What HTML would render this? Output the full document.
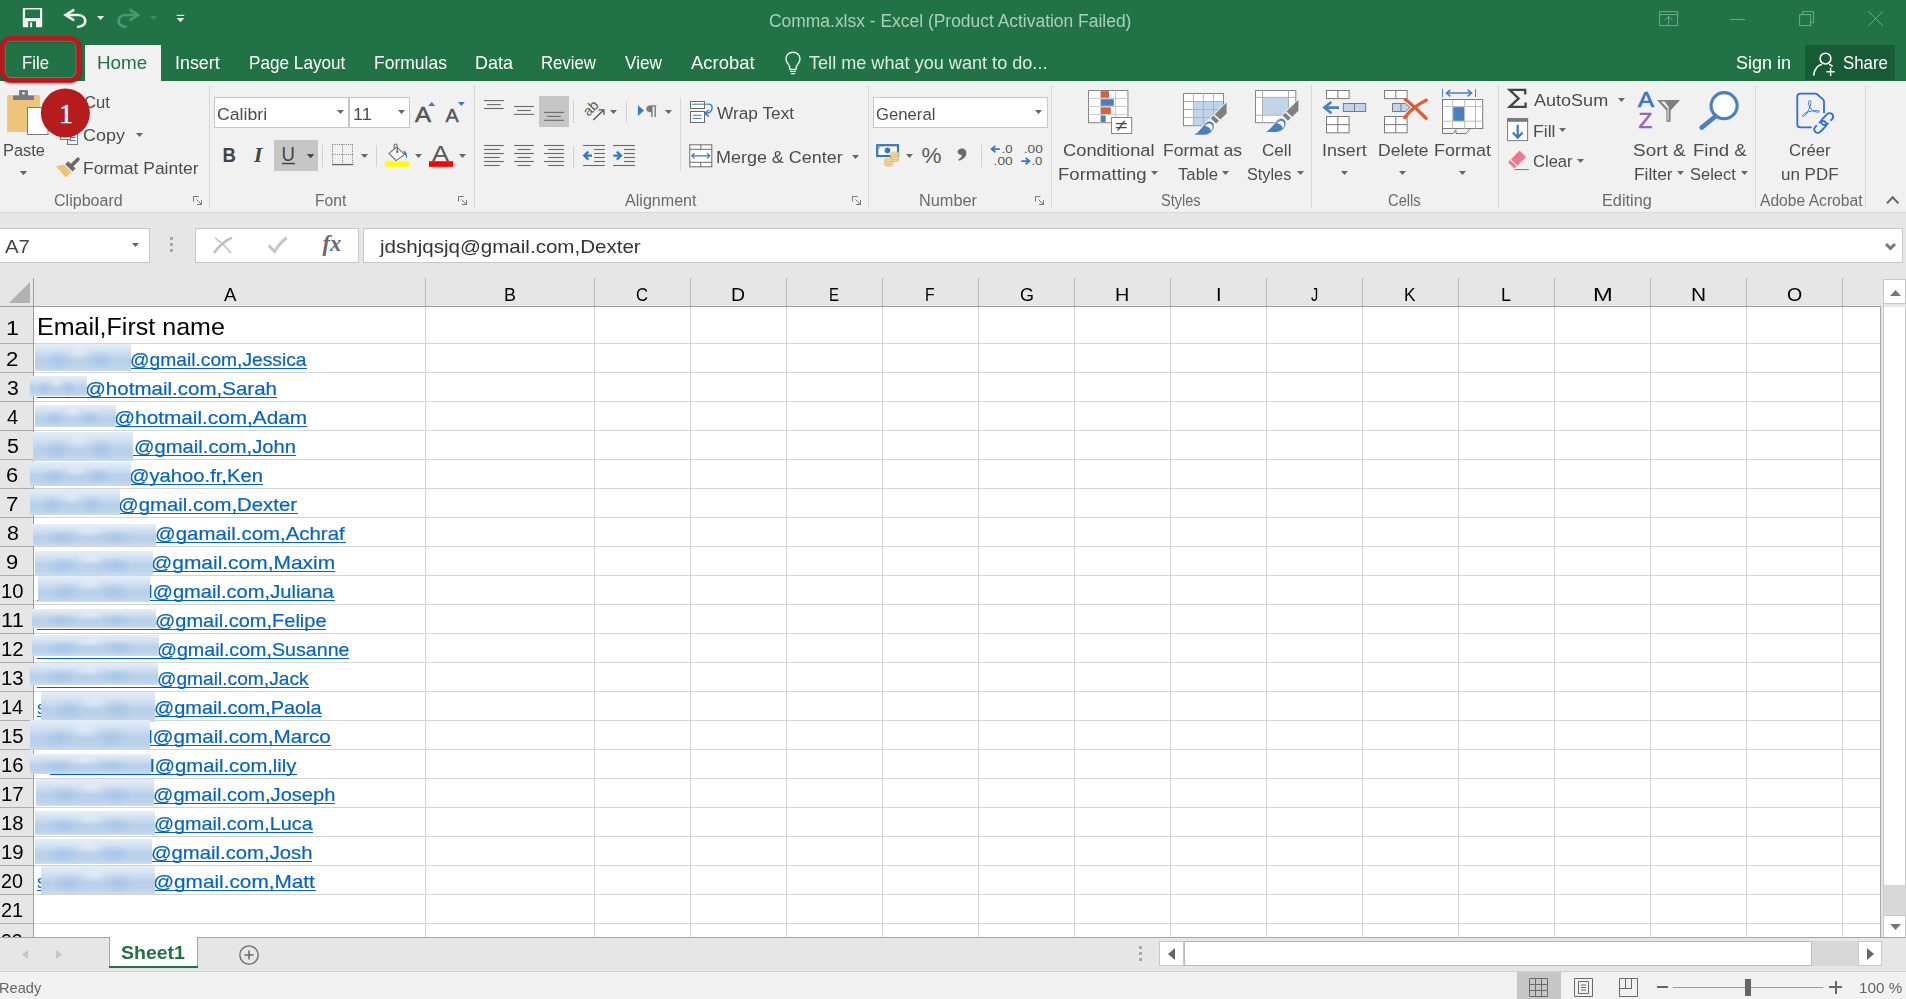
<!DOCTYPE html>
<html lang="en"><head><meta charset="utf-8"><title>Comma.xlsx - Excel</title>
<style>
html,body{margin:0;padding:0;}
body{width:1906px;height:999px;overflow:hidden;position:relative;background:#e6e6e6;font-family:"Liberation Sans",sans-serif;}
body>div,body>span,body>svg{position:absolute;}
body>span{white-space:pre;line-height:1;transform-origin:0 0;}
body>svg{overflow:visible;}
</style></head>
<body>
<div style="left:0px;top:0px;width:1906px;height:81px;background:#217346;"></div>
<div style="left:0px;top:81px;width:1906px;height:131px;background:#f1f1f1;"></div>
<div style="left:0px;top:212px;width:1906px;height:1px;background:#d9d9d9;"></div>
<div style="left:85px;top:45px;width:76px;height:37px;background:#f1f1f1;"></div>
<div style="left:1805px;top:45px;width:90px;height:35px;background:#185c37;"></div>
<span style="left:21.66px;top:55.10px;font-family:'Liberation Sans',sans-serif;font-size:17.8px;font-weight:400;color:#fff;transform:scaleX(0.9435);">File</span>
<span style="left:97.49px;top:55.10px;font-family:'Liberation Sans',sans-serif;font-size:17.8px;font-weight:400;color:#217346;transform:scaleX(1.0606);">Home</span>
<span style="left:175.39px;top:55.10px;font-family:'Liberation Sans',sans-serif;font-size:17.8px;font-weight:400;color:#fff;transform:scaleX(1.0031);">Insert</span>
<span style="left:248.63px;top:55.10px;font-family:'Liberation Sans',sans-serif;font-size:17.8px;font-weight:400;color:#fff;transform:scaleX(0.9652);">Page Layout</span>
<span style="left:373.60px;top:55.10px;font-family:'Liberation Sans',sans-serif;font-size:17.8px;font-weight:400;color:#fff;transform:scaleX(0.9847);">Formulas</span>
<span style="left:474.57px;top:55.10px;font-family:'Liberation Sans',sans-serif;font-size:17.8px;font-weight:400;color:#fff;transform:scaleX(1.0086);">Data</span>
<span style="left:541.16px;top:55.10px;font-family:'Liberation Sans',sans-serif;font-size:17.8px;font-weight:400;color:#fff;transform:scaleX(0.9401);">Review</span>
<span style="left:625.00px;top:55.10px;font-family:'Liberation Sans',sans-serif;font-size:17.8px;font-weight:400;color:#fff;transform:scaleX(0.9675);">View</span>
<span style="left:691.00px;top:55.10px;font-family:'Liberation Sans',sans-serif;font-size:17.8px;font-weight:400;color:#fff;transform:scaleX(1.0366);">Acrobat</span>
<span style="left:808.64px;top:55.10px;font-family:'Liberation Sans',sans-serif;font-size:17.8px;font-weight:400;color:#dcebe2;transform:scaleX(1.0180);">Tell me what you want to do...</span>
<span style="left:1736.19px;top:55.10px;font-family:'Liberation Sans',sans-serif;font-size:17.8px;font-weight:400;color:#fff;transform:scaleX(1.0103);">Sign in</span>
<span style="left:1843.24px;top:55.10px;font-family:'Liberation Sans',sans-serif;font-size:17.8px;font-weight:400;color:#fff;transform:scaleX(0.9482);">Share</span>
<span style="left:768.63px;top:12.10px;font-family:'Liberation Sans',sans-serif;font-size:18px;font-weight:400;color:#a8d0ba;transform:scaleX(0.9687);">Comma.xlsx - Excel (Product Activation Failed)</span>
<div style="left:209px;top:85px;width:1px;height:123px;background:#d8d8d8;"></div>
<div style="left:474px;top:85px;width:1px;height:123px;background:#d8d8d8;"></div>
<div style="left:868px;top:85px;width:1px;height:123px;background:#d8d8d8;"></div>
<div style="left:1051px;top:85px;width:1px;height:123px;background:#d8d8d8;"></div>
<div style="left:1311px;top:85px;width:1px;height:123px;background:#d8d8d8;"></div>
<div style="left:1498px;top:85px;width:1px;height:123px;background:#d8d8d8;"></div>
<div style="left:1755px;top:85px;width:1px;height:123px;background:#d8d8d8;"></div>
<div style="left:1865px;top:85px;width:1px;height:123px;background:#d8d8d8;"></div>
<div style="left:680px;top:98px;width:1px;height:73px;background:#d8d8d8;"></div>
<div style="left:322px;top:145px;width:1px;height:22px;background:#d0d0d0;"></div>
<div style="left:376px;top:145px;width:1px;height:22px;background:#d0d0d0;"></div>
<div style="left:573px;top:101px;width:1px;height:22px;background:#d0d0d0;"></div>
<div style="left:626px;top:101px;width:1px;height:22px;background:#d0d0d0;"></div>
<div style="left:573px;top:146px;width:1px;height:22px;background:#d0d0d0;"></div>
<div style="left:981px;top:145px;width:1px;height:22px;background:#d0d0d0;"></div>
<span style="left:53.70px;top:193.10px;font-family:'Liberation Sans',sans-serif;font-size:15.6px;font-weight:400;color:#6a6a6a;transform:scaleX(1.0303);">Clipboard</span>
<span style="left:314.75px;top:193.10px;font-family:'Liberation Sans',sans-serif;font-size:15.6px;font-weight:400;color:#6a6a6a;transform:scaleX(1.0020);">Font</span>
<span style="left:624.50px;top:193.10px;font-family:'Liberation Sans',sans-serif;font-size:15.6px;font-weight:400;color:#6a6a6a;transform:scaleX(1.0315);">Alignment</span>
<span style="left:918.70px;top:193.10px;font-family:'Liberation Sans',sans-serif;font-size:15.6px;font-weight:400;color:#6a6a6a;transform:scaleX(1.0456);">Number</span>
<span style="left:1160.84px;top:193.10px;font-family:'Liberation Sans',sans-serif;font-size:15.6px;font-weight:400;color:#6a6a6a;transform:scaleX(0.9334);">Styles</span>
<span style="left:1387.76px;top:193.10px;font-family:'Liberation Sans',sans-serif;font-size:15.6px;font-weight:400;color:#6a6a6a;transform:scaleX(0.9436);">Cells</span>
<span style="left:1602.20px;top:193.10px;font-family:'Liberation Sans',sans-serif;font-size:15.6px;font-weight:400;color:#6a6a6a;transform:scaleX(1.0448);">Editing</span>
<span style="left:1759.50px;top:193.10px;font-family:'Liberation Sans',sans-serif;font-size:15.6px;font-weight:400;color:#6a6a6a;transform:scaleX(1.0020);">Adobe Acrobat</span>
<span style="left:2.69px;top:142.10px;font-family:'Liberation Sans',sans-serif;font-size:17.2px;font-weight:400;color:#4c4c4c;transform:scaleX(0.9557);">Paste</span>
<span style="left:84.17px;top:94.10px;font-family:'Liberation Sans',sans-serif;font-size:17.2px;font-weight:400;color:#4c4c4c;transform:scaleX(0.9664);">Cut</span>
<span style="left:82.60px;top:127.10px;font-family:'Liberation Sans',sans-serif;font-size:17.2px;font-weight:400;color:#4c4c4c;transform:scaleX(1.0440);">Copy</span>
<span style="left:82.60px;top:160.10px;font-family:'Liberation Sans',sans-serif;font-size:17.2px;font-weight:400;color:#4c4c4c;transform:scaleX(1.0173);">Format Painter</span>
<span style="left:717.00px;top:105.10px;font-family:'Liberation Sans',sans-serif;font-size:17.2px;font-weight:400;color:#4c4c4c;transform:scaleX(1.0044);">Wrap Text</span>
<span style="left:715.56px;top:149.10px;font-family:'Liberation Sans',sans-serif;font-size:17.2px;font-weight:400;color:#4c4c4c;transform:scaleX(1.0441);">Merge &amp; Center</span>
<span style="left:1062.58px;top:142.10px;font-family:'Liberation Sans',sans-serif;font-size:17.2px;font-weight:400;color:#4c4c4c;transform:scaleX(1.0649);">Conditional</span>
<span style="left:1057.52px;top:166.10px;font-family:'Liberation Sans',sans-serif;font-size:17.2px;font-weight:400;color:#4c4c4c;transform:scaleX(1.0782);">Formatting</span>
<span style="left:1162.60px;top:142.10px;font-family:'Liberation Sans',sans-serif;font-size:17.2px;font-weight:400;color:#4c4c4c;transform:scaleX(1.0215);">Format as</span>
<span style="left:1177.67px;top:166.10px;font-family:'Liberation Sans',sans-serif;font-size:17.2px;font-weight:400;color:#4c4c4c;transform:scaleX(0.9738);">Table</span>
<span style="left:1261.65px;top:142.10px;font-family:'Liberation Sans',sans-serif;font-size:17.2px;font-weight:400;color:#4c4c4c;transform:scaleX(0.9938);">Cell</span>
<span style="left:1247.27px;top:166.10px;font-family:'Liberation Sans',sans-serif;font-size:17.2px;font-weight:400;color:#4c4c4c;transform:scaleX(0.9457);">Styles</span>
<span style="left:1322.39px;top:142.10px;font-family:'Liberation Sans',sans-serif;font-size:17.2px;font-weight:400;color:#4c4c4c;transform:scaleX(1.0378);">Insert</span>
<span style="left:1378.10px;top:142.10px;font-family:'Liberation Sans',sans-serif;font-size:17.2px;font-weight:400;color:#4c4c4c;transform:scaleX(1.0186);">Delete</span>
<span style="left:1434.06px;top:142.10px;font-family:'Liberation Sans',sans-serif;font-size:17.2px;font-weight:400;color:#4c4c4c;transform:scaleX(1.0467);">Format</span>
<span style="left:1533.50px;top:92.10px;font-family:'Liberation Sans',sans-serif;font-size:17.2px;font-weight:400;color:#4c4c4c;transform:scaleX(1.0487);">AutoSum</span>
<span style="left:1532.59px;top:123.10px;font-family:'Liberation Sans',sans-serif;font-size:17.2px;font-weight:400;color:#4c4c4c;transform:scaleX(1.0246);">Fill</span>
<span style="left:1532.67px;top:153.10px;font-family:'Liberation Sans',sans-serif;font-size:17.2px;font-weight:400;color:#4c4c4c;transform:scaleX(0.9633);">Clear</span>
<span style="left:1632.65px;top:142.10px;font-family:'Liberation Sans',sans-serif;font-size:17.2px;font-weight:400;color:#4c4c4c;transform:scaleX(1.1015);">Sort &amp;</span>
<span style="left:1633.61px;top:166.10px;font-family:'Liberation Sans',sans-serif;font-size:17.2px;font-weight:400;color:#4c4c4c;transform:scaleX(1.0105);">Filter</span>
<span style="left:1692.51px;top:142.10px;font-family:'Liberation Sans',sans-serif;font-size:17.2px;font-weight:400;color:#4c4c4c;transform:scaleX(1.0803);">Find &amp;</span>
<span style="left:1690.26px;top:166.10px;font-family:'Liberation Sans',sans-serif;font-size:17.2px;font-weight:400;color:#4c4c4c;transform:scaleX(0.9588);">Select</span>
<span style="left:1788.67px;top:142.10px;font-family:'Liberation Sans',sans-serif;font-size:17.2px;font-weight:400;color:#4c4c4c;transform:scaleX(0.9656);">Créer</span>
<span style="left:1780.98px;top:166.10px;font-family:'Liberation Sans',sans-serif;font-size:17.2px;font-weight:400;color:#4c4c4c;transform:scaleX(0.9886);">un PDF</span>
<div style="left:214px;top:97px;width:135px;height:31px;background:#fff;box-sizing:border-box;border:1px solid #c6c6c6;"></div>
<div style="left:349px;top:97px;width:61px;height:31px;background:#fff;box-sizing:border-box;border:1px solid #c6c6c6;"></div>
<div style="left:873px;top:97px;width:174.5px;height:31px;background:#fff;box-sizing:border-box;border:1px solid #c6c6c6;"></div>
<span style="left:217.12px;top:106.10px;font-family:'Liberation Sans',sans-serif;font-size:17.2px;font-weight:400;color:#4c4c4c;transform:scaleX(1.0285);">Calibri</span>
<span style="left:353.15px;top:106.10px;font-family:'Liberation Sans',sans-serif;font-size:17.2px;font-weight:400;color:#4c4c4c;transform:scaleX(1.0491);">11</span>
<span style="left:875.67px;top:106.10px;font-family:'Liberation Sans',sans-serif;font-size:17.2px;font-weight:400;color:#4c4c4c;transform:scaleX(0.9710);">General</span>
<svg style="left:337px;top:110px;" width="7" height="4" viewBox="0 0 7 4"><path d="M0 0H7L3.5 4Z" fill="#666"/></svg>
<svg style="left:398px;top:110px;" width="7" height="4" viewBox="0 0 7 4"><path d="M0 0H7L3.5 4Z" fill="#666"/></svg>
<svg style="left:1035px;top:110px;" width="7" height="4" viewBox="0 0 7 4"><path d="M0 0H7L3.5 4Z" fill="#666"/></svg>
<div style="left:274px;top:140px;width:44px;height:31px;background:#c6c6c6;"></div>
<div style="left:539px;top:96px;width:30px;height:31px;background:#c6c6c6;"></div>
<svg style="left:20px;top:171px;" width="7" height="4" viewBox="0 0 7 4"><path d="M0 0H7L3.5 4Z" fill="#666"/></svg>
<svg style="left:135.5px;top:133px;" width="7" height="4" viewBox="0 0 7 4"><path d="M0 0H7L3.5 4Z" fill="#666"/></svg>
<svg style="left:307px;top:154px;" width="7" height="4" viewBox="0 0 7 4"><path d="M0 0H7L3.5 4Z" fill="#666"/></svg>
<svg style="left:361px;top:154px;" width="7" height="4" viewBox="0 0 7 4"><path d="M0 0H7L3.5 4Z" fill="#666"/></svg>
<svg style="left:415px;top:154px;" width="7" height="4" viewBox="0 0 7 4"><path d="M0 0H7L3.5 4Z" fill="#666"/></svg>
<svg style="left:459px;top:154px;" width="7" height="4" viewBox="0 0 7 4"><path d="M0 0H7L3.5 4Z" fill="#666"/></svg>
<svg style="left:610px;top:110px;" width="7" height="4" viewBox="0 0 7 4"><path d="M0 0H7L3.5 4Z" fill="#666"/></svg>
<svg style="left:665px;top:110px;" width="7" height="4" viewBox="0 0 7 4"><path d="M0 0H7L3.5 4Z" fill="#666"/></svg>
<svg style="left:852px;top:154.5px;" width="7" height="4" viewBox="0 0 7 4"><path d="M0 0H7L3.5 4Z" fill="#666"/></svg>
<svg style="left:906px;top:154px;" width="7" height="4" viewBox="0 0 7 4"><path d="M0 0H7L3.5 4Z" fill="#666"/></svg>
<svg style="left:1151px;top:171px;" width="7" height="4" viewBox="0 0 7 4"><path d="M0 0H7L3.5 4Z" fill="#666"/></svg>
<svg style="left:1222px;top:171px;" width="7" height="4" viewBox="0 0 7 4"><path d="M0 0H7L3.5 4Z" fill="#666"/></svg>
<svg style="left:1297px;top:171px;" width="7" height="4" viewBox="0 0 7 4"><path d="M0 0H7L3.5 4Z" fill="#666"/></svg>
<svg style="left:1341px;top:171px;" width="7" height="4" viewBox="0 0 7 4"><path d="M0 0H7L3.5 4Z" fill="#666"/></svg>
<svg style="left:1399px;top:171px;" width="7" height="4" viewBox="0 0 7 4"><path d="M0 0H7L3.5 4Z" fill="#666"/></svg>
<svg style="left:1459px;top:171px;" width="7" height="4" viewBox="0 0 7 4"><path d="M0 0H7L3.5 4Z" fill="#666"/></svg>
<svg style="left:1618px;top:98px;" width="7" height="4" viewBox="0 0 7 4"><path d="M0 0H7L3.5 4Z" fill="#666"/></svg>
<svg style="left:1559px;top:127.6px;" width="7" height="4" viewBox="0 0 7 4"><path d="M0 0H7L3.5 4Z" fill="#666"/></svg>
<svg style="left:1577px;top:159px;" width="7" height="4" viewBox="0 0 7 4"><path d="M0 0H7L3.5 4Z" fill="#666"/></svg>
<svg style="left:1677px;top:171px;" width="7" height="4" viewBox="0 0 7 4"><path d="M0 0H7L3.5 4Z" fill="#666"/></svg>
<svg style="left:1741px;top:171px;" width="7" height="4" viewBox="0 0 7 4"><path d="M0 0H7L3.5 4Z" fill="#666"/></svg>
<div style="left:0px;top:228px;width:150px;height:35px;background:#fff;box-sizing:border-box;border:1px solid #c6c6c6;border-left:none;"></div>
<div style="left:195px;top:228px;width:164px;height:35px;background:#fff;box-sizing:border-box;border:1px solid #c6c6c6;"></div>
<div style="left:363px;top:228px;width:1540px;height:35px;background:#fff;box-sizing:border-box;border:1px solid #c6c6c6;"></div>
<span style="left:4.50px;top:237.10px;font-family:'Liberation Sans',sans-serif;font-size:19.2px;font-weight:400;color:#444;transform:scaleX(1.0639);">A7</span>
<span style="left:380.01px;top:237.10px;font-family:'Liberation Sans',sans-serif;font-size:19.0px;font-weight:400;color:#333;transform:scaleX(1.0816);">jdshjqsjq@gmail.com,Dexter</span>
<svg style="left:132px;top:243px;" width="7" height="4" viewBox="0 0 7 4"><path d="M0 0H7L3.5 4Z" fill="#666"/></svg>
<div style="left:170px;top:237px;width:3px;height:3px;background:#a6a6a6;"></div>
<div style="left:170px;top:243px;width:3px;height:3px;background:#a6a6a6;"></div>
<div style="left:170px;top:249px;width:3px;height:3px;background:#a6a6a6;"></div>
<div style="left:34px;top:307px;width:1847px;height:630px;background:#fff;"></div>
<div style="left:425px;top:278px;width:1px;height:29px;background:#b9b9b9;"></div>
<div style="left:594px;top:278px;width:1px;height:29px;background:#b9b9b9;"></div>
<div style="left:690px;top:278px;width:1px;height:29px;background:#b9b9b9;"></div>
<div style="left:786px;top:278px;width:1px;height:29px;background:#b9b9b9;"></div>
<div style="left:882px;top:278px;width:1px;height:29px;background:#b9b9b9;"></div>
<div style="left:978px;top:278px;width:1px;height:29px;background:#b9b9b9;"></div>
<div style="left:1074px;top:278px;width:1px;height:29px;background:#b9b9b9;"></div>
<div style="left:1170px;top:278px;width:1px;height:29px;background:#b9b9b9;"></div>
<div style="left:1266px;top:278px;width:1px;height:29px;background:#b9b9b9;"></div>
<div style="left:1362px;top:278px;width:1px;height:29px;background:#b9b9b9;"></div>
<div style="left:1458px;top:278px;width:1px;height:29px;background:#b9b9b9;"></div>
<div style="left:1554px;top:278px;width:1px;height:29px;background:#b9b9b9;"></div>
<div style="left:1650px;top:278px;width:1px;height:29px;background:#b9b9b9;"></div>
<div style="left:1746px;top:278px;width:1px;height:29px;background:#b9b9b9;"></div>
<div style="left:1842px;top:278px;width:1px;height:29px;background:#b9b9b9;"></div>
<div style="left:33px;top:278px;width:1px;height:660px;background:#9d9d9d;"></div>
<div style="left:0px;top:306px;width:1881px;height:1px;background:#a0a0a0;"></div>
<div style="left:425px;top:307px;width:1px;height:630px;background:#d4d4d4;"></div>
<div style="left:594px;top:307px;width:1px;height:630px;background:#d4d4d4;"></div>
<div style="left:690px;top:307px;width:1px;height:630px;background:#d4d4d4;"></div>
<div style="left:786px;top:307px;width:1px;height:630px;background:#d4d4d4;"></div>
<div style="left:882px;top:307px;width:1px;height:630px;background:#d4d4d4;"></div>
<div style="left:978px;top:307px;width:1px;height:630px;background:#d4d4d4;"></div>
<div style="left:1074px;top:307px;width:1px;height:630px;background:#d4d4d4;"></div>
<div style="left:1170px;top:307px;width:1px;height:630px;background:#d4d4d4;"></div>
<div style="left:1266px;top:307px;width:1px;height:630px;background:#d4d4d4;"></div>
<div style="left:1362px;top:307px;width:1px;height:630px;background:#d4d4d4;"></div>
<div style="left:1458px;top:307px;width:1px;height:630px;background:#d4d4d4;"></div>
<div style="left:1554px;top:307px;width:1px;height:630px;background:#d4d4d4;"></div>
<div style="left:1650px;top:307px;width:1px;height:630px;background:#d4d4d4;"></div>
<div style="left:1746px;top:307px;width:1px;height:630px;background:#d4d4d4;"></div>
<div style="left:1842px;top:307px;width:1px;height:630px;background:#d4d4d4;"></div>
<div style="left:34px;top:343px;width:1847px;height:1px;background:#d4d4d4;"></div>
<div style="left:0px;top:343px;width:33px;height:1px;background:#ababab;"></div>
<div style="left:34px;top:372px;width:1847px;height:1px;background:#d4d4d4;"></div>
<div style="left:0px;top:372px;width:33px;height:1px;background:#ababab;"></div>
<div style="left:34px;top:401px;width:1847px;height:1px;background:#d4d4d4;"></div>
<div style="left:0px;top:401px;width:33px;height:1px;background:#ababab;"></div>
<div style="left:34px;top:430px;width:1847px;height:1px;background:#d4d4d4;"></div>
<div style="left:0px;top:430px;width:33px;height:1px;background:#ababab;"></div>
<div style="left:34px;top:459px;width:1847px;height:1px;background:#d4d4d4;"></div>
<div style="left:0px;top:459px;width:33px;height:1px;background:#ababab;"></div>
<div style="left:34px;top:488px;width:1847px;height:1px;background:#d4d4d4;"></div>
<div style="left:0px;top:488px;width:33px;height:1px;background:#ababab;"></div>
<div style="left:34px;top:517px;width:1847px;height:1px;background:#d4d4d4;"></div>
<div style="left:0px;top:517px;width:33px;height:1px;background:#ababab;"></div>
<div style="left:34px;top:546px;width:1847px;height:1px;background:#d4d4d4;"></div>
<div style="left:0px;top:546px;width:33px;height:1px;background:#ababab;"></div>
<div style="left:34px;top:575px;width:1847px;height:1px;background:#d4d4d4;"></div>
<div style="left:0px;top:575px;width:33px;height:1px;background:#ababab;"></div>
<div style="left:34px;top:604px;width:1847px;height:1px;background:#d4d4d4;"></div>
<div style="left:0px;top:604px;width:33px;height:1px;background:#ababab;"></div>
<div style="left:34px;top:633px;width:1847px;height:1px;background:#d4d4d4;"></div>
<div style="left:0px;top:633px;width:33px;height:1px;background:#ababab;"></div>
<div style="left:34px;top:662px;width:1847px;height:1px;background:#d4d4d4;"></div>
<div style="left:0px;top:662px;width:33px;height:1px;background:#ababab;"></div>
<div style="left:34px;top:691px;width:1847px;height:1px;background:#d4d4d4;"></div>
<div style="left:0px;top:691px;width:33px;height:1px;background:#ababab;"></div>
<div style="left:34px;top:720px;width:1847px;height:1px;background:#d4d4d4;"></div>
<div style="left:0px;top:720px;width:33px;height:1px;background:#ababab;"></div>
<div style="left:34px;top:749px;width:1847px;height:1px;background:#d4d4d4;"></div>
<div style="left:0px;top:749px;width:33px;height:1px;background:#ababab;"></div>
<div style="left:34px;top:778px;width:1847px;height:1px;background:#d4d4d4;"></div>
<div style="left:0px;top:778px;width:33px;height:1px;background:#ababab;"></div>
<div style="left:34px;top:807px;width:1847px;height:1px;background:#d4d4d4;"></div>
<div style="left:0px;top:807px;width:33px;height:1px;background:#ababab;"></div>
<div style="left:34px;top:836px;width:1847px;height:1px;background:#d4d4d4;"></div>
<div style="left:0px;top:836px;width:33px;height:1px;background:#ababab;"></div>
<div style="left:34px;top:865px;width:1847px;height:1px;background:#d4d4d4;"></div>
<div style="left:0px;top:865px;width:33px;height:1px;background:#ababab;"></div>
<div style="left:34px;top:894px;width:1847px;height:1px;background:#d4d4d4;"></div>
<div style="left:0px;top:894px;width:33px;height:1px;background:#ababab;"></div>
<div style="left:34px;top:923px;width:1847px;height:1px;background:#d4d4d4;"></div>
<div style="left:0px;top:923px;width:33px;height:1px;background:#ababab;"></div>
<div style="left:1880px;top:307px;width:1px;height:630px;background:#a6a6a6;"></div>
<svg style="left:9px;top:282px;" width="21" height="21" viewBox="0 0 21 21"><path d="M21 0V21H0Z" fill="#b1b1b1"/></svg>
<span style="left:223.80px;top:285.10px;font-family:'Liberation Sans',sans-serif;font-size:19px;font-weight:400;color:#000;transform:scaleX(0.9803);">A</span>
<span style="left:503.76px;top:285.10px;font-family:'Liberation Sans',sans-serif;font-size:19px;font-weight:400;color:#000;transform:scaleX(0.9434);">B</span>
<span style="left:636.37px;top:285.10px;font-family:'Liberation Sans',sans-serif;font-size:19px;font-weight:400;color:#000;transform:scaleX(0.8778);">C</span>
<span style="left:731.14px;top:285.10px;font-family:'Liberation Sans',sans-serif;font-size:19px;font-weight:400;color:#000;transform:scaleX(1.0251);">D</span>
<span style="left:829.20px;top:285.10px;font-family:'Liberation Sans',sans-serif;font-size:19px;font-weight:400;color:#000;transform:scaleX(0.7910);">E</span>
<span style="left:925.34px;top:285.10px;font-family:'Liberation Sans',sans-serif;font-size:19px;font-weight:400;color:#000;transform:scaleX(0.8291);">F</span>
<span style="left:1019.70px;top:285.10px;font-family:'Liberation Sans',sans-serif;font-size:19px;font-weight:400;color:#000;transform:scaleX(0.9480);">G</span>
<span style="left:1115.31px;top:285.10px;font-family:'Liberation Sans',sans-serif;font-size:19px;font-weight:400;color:#000;transform:scaleX(1.0423);">H</span>
<span style="left:1215.70px;top:285.10px;font-family:'Liberation Sans',sans-serif;font-size:19px;font-weight:400;color:#000;transform:scaleX(1.0521);">I</span>
<span style="left:1311.28px;top:285.10px;font-family:'Liberation Sans',sans-serif;font-size:19px;font-weight:400;color:#000;transform:scaleX(0.7609);">J</span>
<span style="left:1404.12px;top:285.10px;font-family:'Liberation Sans',sans-serif;font-size:19px;font-weight:400;color:#000;transform:scaleX(0.9064);">K</span>
<span style="left:1501.06px;top:285.10px;font-family:'Liberation Sans',sans-serif;font-size:19px;font-weight:400;color:#000;transform:scaleX(0.9452);">L</span>
<span style="left:1592.60px;top:285.10px;font-family:'Liberation Sans',sans-serif;font-size:19px;font-weight:400;color:#000;transform:scaleX(1.2475);">M</span>
<span style="left:1690.93px;top:285.10px;font-family:'Liberation Sans',sans-serif;font-size:19px;font-weight:400;color:#000;transform:scaleX(1.0982);">N</span>
<span style="left:1786.92px;top:285.10px;font-family:'Liberation Sans',sans-serif;font-size:19px;font-weight:400;color:#000;transform:scaleX(1.0294);">O</span>
<span style="left:5.64px;top:319.10px;font-family:'Liberation Sans',sans-serif;font-size:19.6px;font-weight:400;color:#000;transform:scaleX(1.1958);">1</span>
<span style="left:6.29px;top:350.10px;font-family:'Liberation Sans',sans-serif;font-size:19.6px;font-weight:400;color:#000;transform:scaleX(1.1308);">2</span>
<span style="left:6.66px;top:379.10px;font-family:'Liberation Sans',sans-serif;font-size:19.6px;font-weight:400;color:#000;transform:scaleX(1.0837);">3</span>
<span style="left:7.00px;top:408.10px;font-family:'Liberation Sans',sans-serif;font-size:19.6px;font-weight:400;color:#000;transform:scaleX(1.0199);">4</span>
<span style="left:6.54px;top:437.10px;font-family:'Liberation Sans',sans-serif;font-size:19.6px;font-weight:400;color:#000;transform:scaleX(1.0951);">5</span>
<span style="left:6.30px;top:466.10px;font-family:'Liberation Sans',sans-serif;font-size:19.6px;font-weight:400;color:#000;transform:scaleX(1.1186);">6</span>
<span style="left:6.29px;top:495.10px;font-family:'Liberation Sans',sans-serif;font-size:19.6px;font-weight:400;color:#000;transform:scaleX(1.1308);">7</span>
<span style="left:6.54px;top:524.10px;font-family:'Liberation Sans',sans-serif;font-size:19.6px;font-weight:400;color:#000;transform:scaleX(1.0951);">8</span>
<span style="left:6.41px;top:553.10px;font-family:'Liberation Sans',sans-serif;font-size:19.6px;font-weight:400;color:#000;transform:scaleX(1.1186);">9</span>
<span style="left:0.69px;top:582.10px;font-family:'Liberation Sans',sans-serif;font-size:19.6px;font-weight:400;color:#000;transform:scaleX(1.0309);">10</span>
<span style="left:0.54px;top:611.10px;font-family:'Liberation Sans',sans-serif;font-size:19.6px;font-weight:400;color:#000;transform:scaleX(1.1265);">11</span>
<span style="left:0.67px;top:640.10px;font-family:'Liberation Sans',sans-serif;font-size:19.6px;font-weight:400;color:#000;transform:scaleX(1.0413);">12</span>
<span style="left:0.68px;top:669.10px;font-family:'Liberation Sans',sans-serif;font-size:19.6px;font-weight:400;color:#000;transform:scaleX(1.0360);">13</span>
<span style="left:0.70px;top:698.10px;font-family:'Liberation Sans',sans-serif;font-size:19.6px;font-weight:400;color:#000;transform:scaleX(1.0206);">14</span>
<span style="left:0.68px;top:727.10px;font-family:'Liberation Sans',sans-serif;font-size:19.6px;font-weight:400;color:#000;transform:scaleX(1.0360);">15</span>
<span style="left:0.68px;top:756.10px;font-family:'Liberation Sans',sans-serif;font-size:19.6px;font-weight:400;color:#000;transform:scaleX(1.0360);">16</span>
<span style="left:0.67px;top:785.10px;font-family:'Liberation Sans',sans-serif;font-size:19.6px;font-weight:400;color:#000;transform:scaleX(1.0413);">17</span>
<span style="left:0.68px;top:814.10px;font-family:'Liberation Sans',sans-serif;font-size:19.6px;font-weight:400;color:#000;transform:scaleX(1.0360);">18</span>
<span style="left:0.67px;top:843.10px;font-family:'Liberation Sans',sans-serif;font-size:19.6px;font-weight:400;color:#000;transform:scaleX(1.0413);">19</span>
<span style="left:1.21px;top:872.10px;font-family:'Liberation Sans',sans-serif;font-size:19.6px;font-weight:400;color:#000;transform:scaleX(1.0057);">20</span>
<span style="left:1.20px;top:901.10px;font-family:'Liberation Sans',sans-serif;font-size:19.6px;font-weight:400;color:#000;transform:scaleX(1.0156);">21</span>
<div style="left:0;top:924px;width:33px;height:13px;overflow:hidden;"><span style="position:absolute;left:1.2px;top:7.6px;font-size:19.6px;line-height:1;color:#000;white-space:pre;transform:scaleX(0.99);transform-origin:0 0;">22</span></div>
<span style="left:37.20px;top:315.10px;font-family:'Liberation Sans',sans-serif;font-size:24.8px;font-weight:400;color:#000;transform:scaleX(1.0099);">Email,First name</span>
<div style="left:131px;top:367.6px;width:176px;height:1.4px;background:#0563c1;"></div>
<span style="left:129.56px;top:350.10px;font-family:'Liberation Sans',sans-serif;font-size:19.0px;font-weight:400;color:#0563c1;transform:scaleX(1.0116);-webkit-text-stroke:0.2px #0563c1;">@gmail.com,Jessica</span>
<div style="left:37px;top:396.6px;width:240px;height:1.4px;background:#0563c1;"></div>
<span style="left:85.46px;top:379.10px;font-family:'Liberation Sans',sans-serif;font-size:19.0px;font-weight:400;color:#0563c1;transform:scaleX(1.0806);-webkit-text-stroke:0.2px #0563c1;">@hotmail.com,Sarah</span>
<div style="left:50px;top:425.6px;width:257px;height:1.4px;background:#0563c1;"></div>
<span style="left:114.44px;top:408.10px;font-family:'Liberation Sans',sans-serif;font-size:19.0px;font-weight:400;color:#0563c1;transform:scaleX(1.0929);-webkit-text-stroke:0.2px #0563c1;">@hotmail.com,Adam</span>
<div style="left:133px;top:454.6px;width:163px;height:1.4px;background:#0563c1;"></div>
<span style="left:134.48px;top:437.10px;font-family:'Liberation Sans',sans-serif;font-size:19.0px;font-weight:400;color:#0563c1;transform:scaleX(1.0633);-webkit-text-stroke:0.2px #0563c1;">@gmail.com,John</span>
<div style="left:131px;top:483.6px;width:132px;height:1.4px;background:#0563c1;"></div>
<span style="left:129.48px;top:466.10px;font-family:'Liberation Sans',sans-serif;font-size:19.0px;font-weight:400;color:#0563c1;transform:scaleX(1.0631);-webkit-text-stroke:0.2px #0563c1;">@yahoo.fr,Ken</span>
<div style="left:120px;top:512.6px;width:178px;height:1.4px;background:#0563c1;"></div>
<span style="left:118.47px;top:495.10px;font-family:'Liberation Sans',sans-serif;font-size:19.0px;font-weight:400;color:#0563c1;transform:scaleX(1.0714);-webkit-text-stroke:0.2px #0563c1;">@gmail.com,Dexter</span>
<div style="left:156px;top:541.6px;width:190px;height:1.4px;background:#0563c1;"></div>
<span style="left:155.47px;top:524.10px;font-family:'Liberation Sans',sans-serif;font-size:19.0px;font-weight:400;color:#0563c1;transform:scaleX(1.0738);-webkit-text-stroke:0.2px #0563c1;">@gamail.com,Achraf</span>
<div style="left:153px;top:570.6px;width:182px;height:1.4px;background:#0563c1;"></div>
<span style="left:151.43px;top:553.10px;font-family:'Liberation Sans',sans-serif;font-size:19.0px;font-weight:400;color:#0563c1;transform:scaleX(1.1019);-webkit-text-stroke:0.2px #0563c1;">@gmail.com,Maxim</span>
<div style="left:37px;top:599.6px;width:298px;height:1.4px;background:#0563c1;"></div>
<span style="left:148.19px;top:582.10px;font-family:'Liberation Sans',sans-serif;font-size:19.0px;font-weight:400;color:#0563c1;transform:scaleX(1.0589);-webkit-text-stroke:0.2px #0563c1;">l@gmail.com,Juliana</span>
<div style="left:37px;top:628.6px;width:289px;height:1.4px;background:#0563c1;"></div>
<span style="left:154.50px;top:611.10px;font-family:'Liberation Sans',sans-serif;font-size:19.0px;font-weight:400;color:#0563c1;transform:scaleX(1.0532);-webkit-text-stroke:0.2px #0563c1;">@gmail.com,Felipe</span>
<div style="left:37px;top:657.6px;width:312px;height:1.4px;background:#0563c1;"></div>
<span style="left:156.53px;top:640.10px;font-family:'Liberation Sans',sans-serif;font-size:19.0px;font-weight:400;color:#0563c1;transform:scaleX(1.0341);-webkit-text-stroke:0.2px #0563c1;">@gmail.com,Susanne</span>
<div style="left:37px;top:686.6px;width:272px;height:1.4px;background:#0563c1;"></div>
<span style="left:156.56px;top:669.10px;font-family:'Liberation Sans',sans-serif;font-size:19.0px;font-weight:400;color:#0563c1;transform:scaleX(1.0089);-webkit-text-stroke:0.2px #0563c1;">@gmail.com,Jack</span>
<div style="left:37px;top:715.6px;width:285px;height:1.4px;background:#0563c1;"></div>
<span style="left:153.50px;top:698.10px;font-family:'Liberation Sans',sans-serif;font-size:19.0px;font-weight:400;color:#0563c1;transform:scaleX(1.0494);-webkit-text-stroke:0.2px #0563c1;">@gmail.com,Paola</span>
<div style="left:150px;top:744.6px;width:181px;height:1.4px;background:#0563c1;"></div>
<span style="left:148.16px;top:727.10px;font-family:'Liberation Sans',sans-serif;font-size:19.0px;font-weight:400;color:#0563c1;transform:scaleX(1.0875);-webkit-text-stroke:0.2px #0563c1;">l@gmail.com,Marco</span>
<div style="left:50px;top:773.6px;width:247px;height:1.4px;background:#0563c1;"></div>
<span style="left:149.68px;top:756.10px;font-family:'Liberation Sans',sans-serif;font-size:19.0px;font-weight:400;color:#0563c1;transform:scaleX(1.0651);-webkit-text-stroke:0.2px #0563c1;">l@gmail.com,lily</span>
<div style="left:154px;top:802.6px;width:181px;height:1.4px;background:#0563c1;"></div>
<span style="left:152.99px;top:785.10px;font-family:'Liberation Sans',sans-serif;font-size:19.0px;font-weight:400;color:#0563c1;transform:scaleX(1.0579);-webkit-text-stroke:0.2px #0563c1;">@gmail.com,Joseph</span>
<div style="left:155px;top:831.6px;width:158px;height:1.4px;background:#0563c1;"></div>
<span style="left:153.52px;top:814.10px;font-family:'Liberation Sans',sans-serif;font-size:19.0px;font-weight:400;color:#0563c1;transform:scaleX(1.0414);-webkit-text-stroke:0.2px #0563c1;">@gmail.com,Luca</span>
<div style="left:152px;top:860.6px;width:160px;height:1.4px;background:#0563c1;"></div>
<span style="left:150.98px;top:843.10px;font-family:'Liberation Sans',sans-serif;font-size:19.0px;font-weight:400;color:#0563c1;transform:scaleX(1.0674);-webkit-text-stroke:0.2px #0563c1;">@gmail.com,Josh</span>
<div style="left:37px;top:889.6px;width:279px;height:1.4px;background:#0563c1;"></div>
<span style="left:153.44px;top:872.10px;font-family:'Liberation Sans',sans-serif;font-size:19.0px;font-weight:400;color:#0563c1;transform:scaleX(1.0928);-webkit-text-stroke:0.2px #0563c1;">@gmail.com,Matt</span>
<span style="left:36.86px;top:698.10px;font-family:'Liberation Sans',sans-serif;font-size:19.0px;font-weight:400;color:#0563c1;transform:scaleX(0.9211);">s</span>
<span style="left:36.86px;top:872.10px;font-family:'Liberation Sans',sans-serif;font-size:19.0px;font-weight:400;color:#0563c1;transform:scaleX(0.9211);">s</span>
<div style="left:35px;top:344px;width:96px;height:27px;background:radial-gradient(ellipse 14% 38% at 24% 62%,rgba(160,195,232,.75),rgba(160,195,232,0) 100%),radial-gradient(ellipse 14% 38% at 68% 60%,rgba(160,195,232,.75),rgba(160,195,232,0) 100%),radial-gradient(ellipse 12% 30% at 46% 30%,rgba(235,242,250,.6),rgba(235,242,250,0) 100%),linear-gradient(180deg,#e6eef7 0%,#d3e2f2 25%,#b9d0ea 58%,#bcd2eb 82%,#c9dbef 100%);"></div>
<div style="left:30px;top:376px;width:57px;height:20px;background:radial-gradient(ellipse 14% 38% at 24% 62%,rgba(160,195,232,.75),rgba(160,195,232,0) 100%),radial-gradient(ellipse 14% 38% at 68% 60%,rgba(160,195,232,.75),rgba(160,195,232,0) 100%),radial-gradient(ellipse 12% 30% at 46% 30%,rgba(235,242,250,.6),rgba(235,242,250,0) 100%),linear-gradient(180deg,#e6eef7 0%,#d3e2f2 25%,#b9d0ea 58%,#bcd2eb 82%,#c9dbef 100%);"></div>
<div style="left:35px;top:405px;width:81px;height:22px;background:radial-gradient(ellipse 14% 38% at 24% 62%,rgba(160,195,232,.75),rgba(160,195,232,0) 100%),radial-gradient(ellipse 14% 38% at 68% 60%,rgba(160,195,232,.75),rgba(160,195,232,0) 100%),radial-gradient(ellipse 12% 30% at 46% 30%,rgba(235,242,250,.6),rgba(235,242,250,0) 100%),linear-gradient(180deg,#e6eef7 0%,#d3e2f2 25%,#b9d0ea 58%,#bcd2eb 82%,#c9dbef 100%);"></div>
<div style="left:33px;top:432px;width:100px;height:29px;background:radial-gradient(ellipse 14% 38% at 24% 62%,rgba(160,195,232,.75),rgba(160,195,232,0) 100%),radial-gradient(ellipse 14% 38% at 68% 60%,rgba(160,195,232,.75),rgba(160,195,232,0) 100%),radial-gradient(ellipse 12% 30% at 46% 30%,rgba(235,242,250,.6),rgba(235,242,250,0) 100%),linear-gradient(180deg,#e6eef7 0%,#d3e2f2 25%,#b9d0ea 58%,#bcd2eb 82%,#c9dbef 100%);"></div>
<div style="left:30px;top:462px;width:101px;height:24px;background:radial-gradient(ellipse 14% 38% at 24% 62%,rgba(160,195,232,.75),rgba(160,195,232,0) 100%),radial-gradient(ellipse 14% 38% at 68% 60%,rgba(160,195,232,.75),rgba(160,195,232,0) 100%),radial-gradient(ellipse 12% 30% at 46% 30%,rgba(235,242,250,.6),rgba(235,242,250,0) 100%),linear-gradient(180deg,#e6eef7 0%,#d3e2f2 25%,#b9d0ea 58%,#bcd2eb 82%,#c9dbef 100%);"></div>
<div style="left:30px;top:489px;width:90px;height:26px;background:radial-gradient(ellipse 14% 38% at 24% 62%,rgba(160,195,232,.75),rgba(160,195,232,0) 100%),radial-gradient(ellipse 14% 38% at 68% 60%,rgba(160,195,232,.75),rgba(160,195,232,0) 100%),radial-gradient(ellipse 12% 30% at 46% 30%,rgba(235,242,250,.6),rgba(235,242,250,0) 100%),linear-gradient(180deg,#e6eef7 0%,#d3e2f2 25%,#b9d0ea 58%,#bcd2eb 82%,#c9dbef 100%);"></div>
<div style="left:33px;top:524px;width:123px;height:22px;background:radial-gradient(ellipse 14% 38% at 24% 62%,rgba(160,195,232,.75),rgba(160,195,232,0) 100%),radial-gradient(ellipse 14% 38% at 68% 60%,rgba(160,195,232,.75),rgba(160,195,232,0) 100%),radial-gradient(ellipse 12% 30% at 46% 30%,rgba(235,242,250,.6),rgba(235,242,250,0) 100%),linear-gradient(180deg,#e6eef7 0%,#d3e2f2 25%,#b9d0ea 58%,#bcd2eb 82%,#c9dbef 100%);"></div>
<div style="left:35px;top:551px;width:118px;height:24px;background:radial-gradient(ellipse 14% 38% at 24% 62%,rgba(160,195,232,.75),rgba(160,195,232,0) 100%),radial-gradient(ellipse 14% 38% at 68% 60%,rgba(160,195,232,.75),rgba(160,195,232,0) 100%),radial-gradient(ellipse 12% 30% at 46% 30%,rgba(235,242,250,.6),rgba(235,242,250,0) 100%),linear-gradient(180deg,#e6eef7 0%,#d3e2f2 25%,#b9d0ea 58%,#bcd2eb 82%,#c9dbef 100%);"></div>
<div style="left:38px;top:576px;width:112px;height:26px;background:radial-gradient(ellipse 14% 38% at 24% 62%,rgba(160,195,232,.75),rgba(160,195,232,0) 100%),radial-gradient(ellipse 14% 38% at 68% 60%,rgba(160,195,232,.75),rgba(160,195,232,0) 100%),radial-gradient(ellipse 12% 30% at 46% 30%,rgba(235,242,250,.6),rgba(235,242,250,0) 100%),linear-gradient(180deg,#e6eef7 0%,#d3e2f2 25%,#b9d0ea 58%,#bcd2eb 82%,#c9dbef 100%);"></div>
<div style="left:32px;top:609px;width:124px;height:19px;background:radial-gradient(ellipse 14% 38% at 24% 62%,rgba(160,195,232,.75),rgba(160,195,232,0) 100%),radial-gradient(ellipse 14% 38% at 68% 60%,rgba(160,195,232,.75),rgba(160,195,232,0) 100%),radial-gradient(ellipse 12% 30% at 46% 30%,rgba(235,242,250,.6),rgba(235,242,250,0) 100%),linear-gradient(180deg,#e6eef7 0%,#d3e2f2 25%,#b9d0ea 58%,#bcd2eb 82%,#c9dbef 100%);"></div>
<div style="left:32px;top:635px;width:127px;height:21px;background:radial-gradient(ellipse 14% 38% at 24% 62%,rgba(160,195,232,.75),rgba(160,195,232,0) 100%),radial-gradient(ellipse 14% 38% at 68% 60%,rgba(160,195,232,.75),rgba(160,195,232,0) 100%),radial-gradient(ellipse 12% 30% at 46% 30%,rgba(235,242,250,.6),rgba(235,242,250,0) 100%),linear-gradient(180deg,#e6eef7 0%,#d3e2f2 25%,#b9d0ea 58%,#bcd2eb 82%,#c9dbef 100%);"></div>
<div style="left:30px;top:663px;width:128px;height:22px;background:radial-gradient(ellipse 14% 38% at 24% 62%,rgba(160,195,232,.75),rgba(160,195,232,0) 100%),radial-gradient(ellipse 14% 38% at 68% 60%,rgba(160,195,232,.75),rgba(160,195,232,0) 100%),radial-gradient(ellipse 12% 30% at 46% 30%,rgba(235,242,250,.6),rgba(235,242,250,0) 100%),linear-gradient(180deg,#e6eef7 0%,#d3e2f2 25%,#b9d0ea 58%,#bcd2eb 82%,#c9dbef 100%);"></div>
<div style="left:41px;top:692px;width:114px;height:30px;background:radial-gradient(ellipse 14% 38% at 24% 62%,rgba(160,195,232,.75),rgba(160,195,232,0) 100%),radial-gradient(ellipse 14% 38% at 68% 60%,rgba(160,195,232,.75),rgba(160,195,232,0) 100%),radial-gradient(ellipse 12% 30% at 46% 30%,rgba(235,242,250,.6),rgba(235,242,250,0) 100%),linear-gradient(180deg,#e6eef7 0%,#d3e2f2 25%,#b9d0ea 58%,#bcd2eb 82%,#c9dbef 100%);"></div>
<div style="left:30px;top:720px;width:120px;height:30px;background:radial-gradient(ellipse 14% 38% at 24% 62%,rgba(160,195,232,.75),rgba(160,195,232,0) 100%),radial-gradient(ellipse 14% 38% at 68% 60%,rgba(160,195,232,.75),rgba(160,195,232,0) 100%),radial-gradient(ellipse 12% 30% at 46% 30%,rgba(235,242,250,.6),rgba(235,242,250,0) 100%),linear-gradient(180deg,#e6eef7 0%,#d3e2f2 25%,#b9d0ea 58%,#bcd2eb 82%,#c9dbef 100%);"></div>
<div style="left:30px;top:754px;width:121px;height:20px;background:radial-gradient(ellipse 14% 38% at 24% 62%,rgba(160,195,232,.75),rgba(160,195,232,0) 100%),radial-gradient(ellipse 14% 38% at 68% 60%,rgba(160,195,232,.75),rgba(160,195,232,0) 100%),radial-gradient(ellipse 12% 30% at 46% 30%,rgba(235,242,250,.6),rgba(235,242,250,0) 100%),linear-gradient(180deg,#e6eef7 0%,#d3e2f2 25%,#b9d0ea 58%,#bcd2eb 82%,#c9dbef 100%);"></div>
<div style="left:36px;top:779px;width:118px;height:27px;background:radial-gradient(ellipse 14% 38% at 24% 62%,rgba(160,195,232,.75),rgba(160,195,232,0) 100%),radial-gradient(ellipse 14% 38% at 68% 60%,rgba(160,195,232,.75),rgba(160,195,232,0) 100%),radial-gradient(ellipse 12% 30% at 46% 30%,rgba(235,242,250,.6),rgba(235,242,250,0) 100%),linear-gradient(180deg,#e6eef7 0%,#d3e2f2 25%,#b9d0ea 58%,#bcd2eb 82%,#c9dbef 100%);"></div>
<div style="left:35px;top:811px;width:120px;height:24px;background:radial-gradient(ellipse 14% 38% at 24% 62%,rgba(160,195,232,.75),rgba(160,195,232,0) 100%),radial-gradient(ellipse 14% 38% at 68% 60%,rgba(160,195,232,.75),rgba(160,195,232,0) 100%),radial-gradient(ellipse 12% 30% at 46% 30%,rgba(235,242,250,.6),rgba(235,242,250,0) 100%),linear-gradient(180deg,#e6eef7 0%,#d3e2f2 25%,#b9d0ea 58%,#bcd2eb 82%,#c9dbef 100%);"></div>
<div style="left:35px;top:839px;width:117px;height:25px;background:radial-gradient(ellipse 14% 38% at 24% 62%,rgba(160,195,232,.75),rgba(160,195,232,0) 100%),radial-gradient(ellipse 14% 38% at 68% 60%,rgba(160,195,232,.75),rgba(160,195,232,0) 100%),radial-gradient(ellipse 12% 30% at 46% 30%,rgba(235,242,250,.6),rgba(235,242,250,0) 100%),linear-gradient(180deg,#e6eef7 0%,#d3e2f2 25%,#b9d0ea 58%,#bcd2eb 82%,#c9dbef 100%);"></div>
<div style="left:41px;top:866px;width:114px;height:28px;background:radial-gradient(ellipse 14% 38% at 24% 62%,rgba(160,195,232,.75),rgba(160,195,232,0) 100%),radial-gradient(ellipse 14% 38% at 68% 60%,rgba(160,195,232,.75),rgba(160,195,232,0) 100%),radial-gradient(ellipse 12% 30% at 46% 30%,rgba(235,242,250,.6),rgba(235,242,250,0) 100%),linear-gradient(180deg,#e6eef7 0%,#d3e2f2 25%,#b9d0ea 58%,#bcd2eb 82%,#c9dbef 100%);"></div>
<div style="left:1883px;top:279px;width:23px;height:659px;background:#fff;box-sizing:border-box;border:1px solid #c8c8c8;"></div>
<div style="left:1884px;top:304px;width:22px;height:3px;background:#e6e6e6;"></div>
<div style="left:1884px;top:885px;width:22px;height:30px;background:#d8d8d8;"></div>
<svg style="left:1890px;top:290px;" width="11" height="6" viewBox="0 0 11 6"><path d="M0 6H11L5.5 0Z" fill="#777"/></svg>
<svg style="left:1890px;top:924px;" width="11" height="6" viewBox="0 0 11 6"><path d="M0 0H11L5.5 6Z" fill="#777"/></svg>
<div style="left:1883px;top:303px;width:23px;height:1px;background:#c8c8c8;"></div>
<div style="left:1883px;top:915px;width:23px;height:1px;background:#c8c8c8;"></div>
<svg style="left:1885px;top:243px;" width="11" height="8" viewBox="0 0 11 8"><path d="M1 1L5.5 5.5L10 1" fill="none" stroke="#777" stroke-width="3"/></svg>
<div style="left:0px;top:937px;width:1906px;height:1px;background:#a6a6a6;"></div>
<div style="left:0px;top:938px;width:1906px;height:33px;background:#e6e6e6;"></div>
<div style="left:109px;top:937px;width:89px;height:29px;background:#fff;box-sizing:border-box;border-left:1px solid #a6a6a6;border-right:1px solid #a6a6a6;"></div>
<div style="left:109px;top:966px;width:89px;height:2.4px;background:#217346;"></div>
<span style="left:121.01px;top:944.10px;font-family:'Liberation Sans',sans-serif;font-size:18px;font-weight:700;color:#217346;transform:scaleX(1.0836);">Sheet1</span>
<svg style="left:21.5px;top:950px;" width="6" height="9" viewBox="0 0 6 9"><path d="M6 0V9L0 4.5Z" fill="#c4c4c4"/></svg>
<svg style="left:55.5px;top:950px;" width="6" height="9" viewBox="0 0 6 9"><path d="M0 0V9L6 4.5Z" fill="#c4c4c4"/></svg>
<svg style="left:239px;top:945px;" width="20" height="20" viewBox="0 0 20 20"><circle cx="10" cy="10" r="9.2" fill="none" stroke="#6a6a6a" stroke-width="1.3"/><path d="M10 5.5V14.5M5.5 10H14.5" stroke="#6a6a6a" stroke-width="1.5"/></svg>
<div style="left:1139px;top:945.5px;width:3px;height:3px;background:#a9a9a9;"></div>
<div style="left:1139px;top:951.5px;width:3px;height:3px;background:#a9a9a9;"></div>
<div style="left:1139px;top:957.5px;width:3px;height:3px;background:#a9a9a9;"></div>
<div style="left:1159px;top:941px;width:723px;height:25px;background:#d8d8d8;"></div>
<div style="left:1159px;top:941px;width:25px;height:25px;background:#fff;box-sizing:border-box;border:1px solid #c8c8c8;"></div>
<div style="left:1858px;top:941px;width:24px;height:25px;background:#fff;box-sizing:border-box;border:1px solid #c8c8c8;"></div>
<div style="left:1184px;top:941px;width:628px;height:25px;background:#fff;box-sizing:border-box;border:1px solid #b9b9b9;"></div>
<svg style="left:1167.5px;top:947.5px;" width="7" height="12" viewBox="0 0 7 12"><path d="M7 0V12L0 6Z" fill="#666"/></svg>
<svg style="left:1867px;top:947.5px;" width="7" height="12" viewBox="0 0 7 12"><path d="M0 0V12L7 6Z" fill="#666"/></svg>
<div style="left:0px;top:971px;width:1906px;height:1px;background:#cfcfcf;"></div>
<div style="left:0px;top:972px;width:1906px;height:27px;background:#f1f1f1;"></div>
<span style="left:-0.67px;top:981.10px;font-family:'Liberation Sans',sans-serif;font-size:14.6px;font-weight:400;color:#666;transform:scaleX(0.9998);">Ready</span>
<span style="left:1859.36px;top:981.10px;font-family:'Liberation Sans',sans-serif;font-size:14.6px;font-weight:400;color:#666;transform:scaleX(1.0433);">100 %</span>
<div style="left:1517px;top:972px;width:44px;height:27px;background:#c6c6c6;"></div>
<svg style="left:1529px;top:978px;" width="19" height="19" viewBox="0 0 19 19"><path d="M.5 .5H18.5V18.5H.5ZM6.5 .5V18.5M12.5 .5V18.5M.5 6.5H18.5M.5 12.5H18.5" fill="none" stroke="#6a6a6a" stroke-width="1"/></svg>
<svg style="left:1574px;top:978px;" width="19" height="19" viewBox="0 0 19 19"><path d="M.5 .5H18.5V18.5H.5Z" fill="none" stroke="#6a6a6a"/><path d="M4.5 3.5H14.5V15.5H4.5Z" fill="none" stroke="#6a6a6a"/><path d="M7 7H12M7 9.5H12M7 12H12" stroke="#6a6a6a"/></svg>
<svg style="left:1619px;top:978px;" width="19" height="19" viewBox="0 0 19 19"><path d="M.5 .5H18.5V18.5H.5Z" fill="none" stroke="#6a6a6a"/><path d="M.5 10.5H12.5V.5M6.5 .5V10.5" fill="none" stroke="#6a6a6a"/></svg>
<div style="left:1657px;top:986px;width:11px;height:2px;background:#666;"></div>
<div style="left:1673px;top:987px;width:150px;height:1px;background:#a0a0a0;"></div>
<div style="left:1745px;top:979px;width:6px;height:17px;background:#666;"></div>
<div style="left:1829px;top:986px;width:13px;height:2px;background:#666;"></div>
<div style="left:1834.5px;top:980.5px;width:2px;height:13px;background:#666;"></div>
<svg style="left:0;top:0" width="1906" height="999" viewBox="0 0 1906 999"><path d="M23.8 8H41.2Q42.2 8 42.2 9V26.2Q42.2 27.2 41.2 27.2H23.8Q22.8 27.2 22.8 26.2V9Q22.8 8 23.8 8Z M25.1 9.5V18H40V9.5Z M28.2 21.2V27.2H36V21.2Z" fill="#f0f0f0" fill-rule="evenodd"/><rect x="30.1" y="22.4" width="2" height="4.8" fill="#f0f0f0" /><path d="M74.2 9.6L65.6 15L74.2 20.4" fill="none" stroke="#f0f0f0" stroke-width="2.6" stroke-linejoin="miter"/><path d="M66.5 15H78C83.5 15 85.2 18.6 85.2 21.2C85.2 24.6 82 26.6 77 27" fill="none" stroke="#f0f0f0" stroke-width="2.6" /><path d="M129.6 9.6L138.2 15L129.6 20.4" fill="none" stroke="#4c9871" stroke-width="2.6" /><path d="M137.3 15H125.8C120.3 15 118.6 18.6 118.6 21.2C118.6 24.6 121.8 26.6 126.8 27" fill="none" stroke="#4c9871" stroke-width="2.6" /><path d="M97 16H104.2L100.6 20Z" fill="#f0f0f0" /><path d="M150 16H157.2L153.6 20Z" fill="#3f8c64" /><rect x="176.7" y="14.8" width="7.5" height="1.2" fill="#f0f0f0" /><path d="M176.7 18H184.2L180.45 22.2Z" fill="#f0f0f0" /><rect x="1659.6" y="11.6" width="18" height="14" fill="none" stroke="#6fab8a" stroke-width="1" /><path d="M1659.6 14.6H1677.6M1668.6 25.6V16.6M1664.6 20.2L1668.6 16.4L1672.6 20.2" fill="none" stroke="#6fab8a" stroke-width="1" /><path d="M1730 19.5H1745.2" fill="none" stroke="#6fab8a" stroke-width="1" /><rect x="1799.6" y="14.6" width="11" height="11" fill="none" stroke="#6fab8a" stroke-width="1" /><path d="M1802.6 14.6V11.6H1813.6V22.6H1810.6" fill="none" stroke="#6fab8a" stroke-width="1" /><path d="M1868.2 11.2L1883 26M1883 11.2L1868.2 26" fill="none" stroke="#6fab8a" stroke-width="1" /><path d="M793 52.2C788.6 52.2 786 55.4 786 59C786 62 788 63.6 789.2 65.6C789.8 66.8 789.9 68 789.9 69.4H796.1C796.1 68 796.2 66.8 796.8 65.6C798 63.6 800 62 800 59C800 55.4 797.4 52.2 793 52.2Z" fill="none" stroke="#e6f1ea" stroke-width="1.4" /><path d="M790 71.4H796M790.8 73.6H795.2" fill="none" stroke="#e6f1ea" stroke-width="1.3" /><circle cx="1825.5" cy="58.6" r="5.4" fill="none" stroke="#fff" stroke-width="1.6"/><path d="M1813.6 75.6C1814.4 68.6 1818.4 65 1822 64.2" fill="none" stroke="#fff" stroke-width="1.6" /><path d="M1829 64.2C1830.4 64.6 1831.6 65.4 1832.6 66.4" fill="none" stroke="#fff" stroke-width="1.6" /><path d="M1830.6 67.6V76M1826.4 71.8H1834.8" fill="none" stroke="#fff" stroke-width="1.5" /><rect x="7" y="95" width="33" height="37" fill="#eec47c" rx="1.5" /><path d="M19 95.5V91Q19 90 20 90H27Q28 90 28 91V95.5H33Q34 95.5 34 96.5V100H13V96.5Q13 95.5 14 95.5Z" fill="#7a7a7a" /><circle cx="23.5" cy="93.3" r="1.3" fill="#f1f1f1"/><rect x="27.5" y="107.5" width="20.5" height="27" fill="#fff" stroke="#7a7a7a" stroke-width="1" /><path d="M20 171H27L23.5 175Z" fill="#666" /><rect x="67.5" y="128.5" width="10" height="16" fill="#fff" stroke="#7a7a7a" stroke-width="1" /><path d="M69.5 137.5H75.5M69.5 140.5H75.5" fill="none" stroke="#3a78c2" stroke-width="1" /><rect x="60.5" y="125.5" width="10" height="14" fill="#fff" stroke="#7a7a7a" stroke-width="1" /><path d="M78 159.2L72.2 165" fill="none" stroke="#6a6a6a" stroke-width="3.6" stroke-linecap="round"/><path d="M65.2 164.2L68.2 161.2L75.6 168.6L72.6 171.6Z" fill="#6a6a6a" /><path d="M56 166.2L63.8 164.6L71.8 172.4L65.4 177.4Z" fill="#eec47c" /><path d="M193.5 201.5V196.5H198.5" fill="none" stroke="#777" stroke-width="1" /><path d="M196.5 199.5L201 204M201.5 200V204.5H197" fill="none" stroke="#777" stroke-width="1" /><path d="M458.5 201.5V196.5H463.5" fill="none" stroke="#777" stroke-width="1" /><path d="M461.5 199.5L466 204M466.5 200V204.5H462" fill="none" stroke="#777" stroke-width="1" /><path d="M852.5 201.5V196.5H857.5" fill="none" stroke="#777" stroke-width="1" /><path d="M855.5 199.5L860 204M860.5 200V204.5H856" fill="none" stroke="#777" stroke-width="1" /><path d="M1035.5 201.5V196.5H1040.5" fill="none" stroke="#777" stroke-width="1" /><path d="M1038.5 199.5L1043 204M1043.5 200V204.5H1039" fill="none" stroke="#777" stroke-width="1" /><text x="222.4" y="161.5" font-size="21" fill="#444" font-weight="700" font-family="'Liberation Sans',sans-serif" textLength="13.4" lengthAdjust="spacingAndGlyphs">B</text><text x="254" y="161.5" font-size="21.5" fill="#444" font-weight="700" font-family="'Liberation Serif',serif" font-style="italic">I</text><text x="281.6" y="161.3" font-size="20" fill="#444" font-weight="400" font-family="'Liberation Sans',sans-serif" textLength="13.4" lengthAdjust="spacingAndGlyphs">U</text><rect x="282" y="162.8" width="13" height="1.5" fill="#444" /><path d="M307 154.3H314.2L310.6 158.3Z" fill="#444" /><path d="M332.5 144.5H353M332.5 154.5H353M332.5 144.5V164M342.5 144.5V164M352.5 144.5V164" fill="none" stroke="#777" stroke-width="1" stroke-dasharray="1 1.2"/><path d="M332 164.6H353.2" fill="none" stroke="#666" stroke-width="1.3" /><path d="M396.6 147.2L404.6 154.4L396 160.6L389 153.4Z" fill="#fff" stroke="#6a6a6a" stroke-width="1.1" stroke-linejoin="round"/><path d="M397.2 151.6V145.4C397.2 143.6 394.2 143.6 394.2 145.4V148.6" fill="none" stroke="#6a6a6a" stroke-width="1.1" /><circle cx="397.2" cy="151.8" r="1.2" fill="#6a6a6a"/><path d="M403.4 150.4C406.8 151.6 407.8 155.6 406.6 159.2C406.4 156.6 405.6 154.8 404.4 154.2Z" fill="#3a78c2" /><rect x="385" y="161.2" width="24" height="5.6" fill="#ffff00" /><text x="432" y="161" font-size="21.4" fill="#555" font-weight="400" font-family="'Liberation Sans',sans-serif" textLength="17" lengthAdjust="spacingAndGlyphs">A</text><rect x="429" y="161.2" width="24" height="5.6" fill="#ff0000" /><text x="415" y="121.7" font-size="22.6" fill="#555" font-weight="400" font-family="'Liberation Sans',sans-serif" textLength="16" lengthAdjust="spacingAndGlyphs" stroke="#555" stroke-width="0.6">A</text><text x="445.6" y="121.7" font-size="18.7" fill="#555" font-weight="400" font-family="'Liberation Sans',sans-serif" textLength="13.2" lengthAdjust="spacingAndGlyphs" stroke="#555" stroke-width="0.5">A</text><path d="M428.2 105.9H435.2L431.7 101.9Z" fill="#3a78c2" /><path d="M457.9 101.9H464.9L461.4 105.9Z" fill="#3a78c2" /><path d="M484 100.6H503.8" fill="none" stroke="#6a6a6a" stroke-width="1.1" /><path d="M487 104.6H500.8" fill="none" stroke="#6a6a6a" stroke-width="1.1" /><path d="M484 108.5H503.8" fill="none" stroke="#6a6a6a" stroke-width="1.1" /><path d="M514.1 106.5H533.9" fill="none" stroke="#6a6a6a" stroke-width="1.1" /><path d="M517.1 110.5H530.9" fill="none" stroke="#6a6a6a" stroke-width="1.1" /><path d="M514.1 114.4H533.9" fill="none" stroke="#6a6a6a" stroke-width="1.1" /><path d="M544.1 112.4H563.9" fill="none" stroke="#6a6a6a" stroke-width="1.1" /><path d="M547.1 116.4H560.9" fill="none" stroke="#6a6a6a" stroke-width="1.1" /><path d="M544.1 120.3H563.9" fill="none" stroke="#6a6a6a" stroke-width="1.1" /><path d="M484 145.5H503.8" fill="none" stroke="#6a6a6a" stroke-width="1.1" /><path d="M514.1 145.5H533.9" fill="none" stroke="#6a6a6a" stroke-width="1.1" /><path d="M544.1 145.5H563.9" fill="none" stroke="#6a6a6a" stroke-width="1.1" /><path d="M583.1 145.5H604.9" fill="none" stroke="#6a6a6a" stroke-width="1.1" /><path d="M613 145.5H635" fill="none" stroke="#6a6a6a" stroke-width="1.1" /><path d="M484 149.5H499.7" fill="none" stroke="#6a6a6a" stroke-width="1.1" /><path d="M517.2 149.5H530.8" fill="none" stroke="#6a6a6a" stroke-width="1.1" /><path d="M548.2 149.5H563.9" fill="none" stroke="#6a6a6a" stroke-width="1.1" /><path d="M594.1 149.5H604.9" fill="none" stroke="#6a6a6a" stroke-width="1.1" /><path d="M624 149.5H635" fill="none" stroke="#6a6a6a" stroke-width="1.1" /><path d="M484 153.5H503.8" fill="none" stroke="#6a6a6a" stroke-width="1.1" /><path d="M514.1 153.5H533.9" fill="none" stroke="#6a6a6a" stroke-width="1.1" /><path d="M544.1 153.5H563.9" fill="none" stroke="#6a6a6a" stroke-width="1.1" /><path d="M594.1 153.5H604.9" fill="none" stroke="#6a6a6a" stroke-width="1.1" /><path d="M624 153.5H635" fill="none" stroke="#6a6a6a" stroke-width="1.1" /><path d="M484 157.5H499.7" fill="none" stroke="#6a6a6a" stroke-width="1.1" /><path d="M517.2 157.5H530.8" fill="none" stroke="#6a6a6a" stroke-width="1.1" /><path d="M548.2 157.5H563.9" fill="none" stroke="#6a6a6a" stroke-width="1.1" /><path d="M594.1 157.5H604.9" fill="none" stroke="#6a6a6a" stroke-width="1.1" /><path d="M624 157.5H635" fill="none" stroke="#6a6a6a" stroke-width="1.1" /><path d="M484 161.5H503.8" fill="none" stroke="#6a6a6a" stroke-width="1.1" /><path d="M514.1 161.5H533.9" fill="none" stroke="#6a6a6a" stroke-width="1.1" /><path d="M544.1 161.5H563.9" fill="none" stroke="#6a6a6a" stroke-width="1.1" /><path d="M594.1 161.5H604.9" fill="none" stroke="#6a6a6a" stroke-width="1.1" /><path d="M624 161.5H635" fill="none" stroke="#6a6a6a" stroke-width="1.1" /><path d="M484 165.5H499.7" fill="none" stroke="#6a6a6a" stroke-width="1.1" /><path d="M517.2 165.5H530.8" fill="none" stroke="#6a6a6a" stroke-width="1.1" /><path d="M548.2 165.5H563.9" fill="none" stroke="#6a6a6a" stroke-width="1.1" /><path d="M583.1 165.5H604.9" fill="none" stroke="#6a6a6a" stroke-width="1.1" /><path d="M613 165.5H635" fill="none" stroke="#6a6a6a" stroke-width="1.1" /><path d="M592 155.6H584.6M588.4 151.6L584.2 155.6L588.4 159.6" fill="none" stroke="#3a78c2" stroke-width="2.3" /><path d="M613.2 155.6H620.6M616.8 151.6L621 155.6L616.8 159.6" fill="none" stroke="#3a78c2" stroke-width="2.3" /><text transform="translate(588.6,117) rotate(-45)" font-size="14" fill="#555" font-family="'Liberation Sans',sans-serif" x="0" y="0">ab</text><path d="M593.2 120L603.6 110M598.6 109.8H603.9V115.1" fill="none" stroke="#555" stroke-width="1.3" /><path d="M637.9 105.2L644 110.5L637.9 115.9Z" fill="#3a78c2" /><path d="M651.2 105.2H656.4V106.5H655.9V116.9H654.5V106.5H652.6V116.9H651.2V112.2C644.6 112.2 644.6 105.2 651.2 105.2Z" fill="#7a7a7a" /><rect x="690.5" y="101.5" width="14" height="7" fill="#fff" stroke="#6a6a6a" stroke-width="1" /><rect x="690.5" y="111.5" width="14" height="11" fill="#fff" stroke="#6a6a6a" stroke-width="1" /><path d="M692 104.2H710M692.6 115.3H701.6M692.6 118.4H701.6" fill="none" stroke="#3a78c2" stroke-width="1" /><path d="M709.4 104.2C713.4 105.4 713.4 112.6 706 113.4M708.6 110L704.8 113.4L708.8 116.4" fill="none" stroke="#3a78c2" stroke-width="1.4" /><rect x="689.8" y="144.8" width="22" height="22" fill="#fff" stroke="#6a6a6a" stroke-width="1" /><path d="M689.8 149.3H711.8M689.8 162.3H711.8M700.8 144.8V149.3M700.8 162.3V166.8" fill="none" stroke="#6a6a6a" stroke-width="1" /><path d="M692 155.8H709.6M694.6 153.2L691.8 155.8L694.6 158.4M707 153.2L709.8 155.8L707 158.4" fill="none" stroke="#3a78c2" stroke-width="1.2" /><rect x="877.2" y="145.2" width="20.8" height="10.8" fill="#fff" stroke="#3a75b8" stroke-width="2.2" /><circle cx="887.5" cy="150.4" r="2.8" fill="#3a75b8"/><path d="M878 148.4C879.4 148.2 880 147.4 880 146.4M897 152.6C895.6 152.8 895 153.6 895 154.6" fill="none" stroke="#3a75b8" stroke-width="1" /><ellipse cx="894.6" cy="160" rx="4.3" ry="1.5" fill="#f1d9a8" stroke="#e3b667" stroke-width="0.9"/><ellipse cx="894.6" cy="157.8" rx="4.3" ry="1.5" fill="#f1d9a8" stroke="#e3b667" stroke-width="0.9"/><ellipse cx="894.6" cy="155.6" rx="4.3" ry="1.5" fill="#f1d9a8" stroke="#e3b667" stroke-width="0.9"/><ellipse cx="894.6" cy="153.4" rx="4.3" ry="1.5" fill="#f1d9a8" stroke="#e3b667" stroke-width="0.9"/><ellipse cx="888.6" cy="164.6" rx="4.3" ry="1.5" fill="#f1d9a8" stroke="#e3b667" stroke-width="0.9"/><ellipse cx="888.6" cy="162.4" rx="4.3" ry="1.5" fill="#f1d9a8" stroke="#e3b667" stroke-width="0.9"/><ellipse cx="888.6" cy="160.2" rx="4.3" ry="1.5" fill="#f1d9a8" stroke="#e3b667" stroke-width="0.9"/><text x="921.5" y="163.4" font-size="22.5" fill="#5a5a5a" font-weight="400" font-family="'Liberation Sans',sans-serif" textLength="20" lengthAdjust="spacingAndGlyphs">%</text><path d="M962 148.4C964.6 148.4 966.4 150.2 966.4 152.8C966.4 156.6 963.4 159.6 958.8 160.8L958.2 159.4C960.6 158.4 961.8 156.8 961.8 155.6C961.8 154.6 957.6 154.8 957.6 151.8C957.6 149.8 959.6 148.4 962 148.4Z" fill="#6a6a6a" /><text x="1001.6" y="152.7" font-size="11.4" fill="#555" font-weight="400" font-family="'Liberation Sans',sans-serif" textLength="11" lengthAdjust="spacingAndGlyphs">.0</text><text x="993.6" y="164.8" font-size="11.4" fill="#555" font-weight="400" font-family="'Liberation Sans',sans-serif" textLength="19" lengthAdjust="spacingAndGlyphs">.00</text><text x="1023.8" y="152.7" font-size="11.4" fill="#555" font-weight="400" font-family="'Liberation Sans',sans-serif" textLength="19" lengthAdjust="spacingAndGlyphs">.00</text><text x="1031.4" y="164.8" font-size="11.4" fill="#555" font-weight="400" font-family="'Liberation Sans',sans-serif" textLength="11" lengthAdjust="spacingAndGlyphs">.0</text><path d="M999.8 149.1H992M995.4 145.9L991.6 149.1L995.4 152.3" fill="none" stroke="#3a78c2" stroke-width="1.8" /><path d="M1021.2 161.1H1029M1025.6 157.9L1029.4 161.1L1025.6 164.3" fill="none" stroke="#3a78c2" stroke-width="1.8" /><rect x="1088.5" y="90.5" width="39.4" height="32.2" fill="#fff" stroke="#858585" stroke-width="1" /><path d="M1100.5 90.5V122.7M1115.6 90.5V122.7M1088.5 98.4H1127.9M1088.5 106.5H1127.9M1088.5 114.6H1127.9" fill="none" stroke="#c9c9c9" stroke-width="1" /><rect x="1101" y="91.1" width="8" height="6.7" fill="#d9603b" /><rect x="1101" y="99.2" width="12.8" height="6.6" fill="#4a80bd" /><rect x="1101" y="107.3" width="9.8" height="6.7" fill="#d9603b" /><rect x="1101" y="115.4" width="4.7" height="6.6" fill="#4a80bd" /><rect x="1111.5" y="117.5" width="20.2" height="16" fill="#fff" stroke="#858585" stroke-width="1" /><text x="1115.6" y="131.2" font-size="16" fill="#444" font-weight="400" font-family="'Liberation Sans',sans-serif" textLength="12" lengthAdjust="spacingAndGlyphs">≠</text><rect x="1183.5" y="93.5" width="40" height="32.2" fill="#fff" stroke="#858585" stroke-width="1" /><rect x="1193.4" y="101.5" width="29.6" height="23.7" fill="#c0d4ea" /><path d="M1193.4 93.5V125.7M1203.4 93.5V125.7M1213.5 93.5V125.7M1183.5 101.5H1223.5M1183.5 109.5H1223.5M1183.5 117.6H1223.5" fill="none" stroke="#b0b0b0" stroke-width="1" /><path d="M1228 100L1192.4 135.6V136.2H1228Z" fill="#f1f1f1" /><path d="M1226.6 102.6V113.6L1220.4 119.6L1214.6 114.4Z" fill="#808080" /><path d="M1213.4 115.6L1219 120.8L1216.2 123.6L1210.8 118.4Z" fill="#808080" /><path d="M1194.2 134.8C1200 131 1203 126 1205.6 123.4C1208.6 120.4 1212.6 121.4 1213.6 124.6C1214.8 128.6 1211 134.8 1204 134.8Z" fill="#4a80bd" /><path d="M1205 126C1207 122.6 1211.4 122.6 1212.4 126C1212.8 128 1212 129.8 1211 131C1210.6 128.4 1208 126.2 1205 126Z" fill="#fff" /><rect x="1255.5" y="90.5" width="40.3" height="32.2" fill="#fff" stroke="#858585" stroke-width="1" /><rect x="1262.6" y="97.4" width="25.9" height="17.8" fill="#c0d4ea" /><path d="M1262.6 90.5V122.7M1288.5 90.5V122.7M1255.5 97.4H1295.8M1255.5 115.2H1295.8" fill="none" stroke="#b0b0b0" stroke-width="1" /><path d="M1299.8 97.2L1264.2 132.79999999999998V133.39999999999998H1299.8Z" fill="#f1f1f1" /><path d="M1298.3999999999999 99.8V110.8L1292.2 116.8L1286.3999999999999 111.60000000000001Z" fill="#808080" /><path d="M1285.2 112.8L1290.8 118.0L1288.0 120.8L1282.6 115.60000000000001Z" fill="#808080" /><path d="M1266.0 132.0C1271.8 128.2 1274.8 123.2 1277.3999999999999 120.60000000000001C1280.3999999999999 117.60000000000001 1284.3999999999999 118.60000000000001 1285.3999999999999 121.8C1286.6 125.8 1282.8 132.0 1275.8 132.0Z" fill="#4a80bd" /><path d="M1276.8 123.2C1278.8 119.8 1283.2 119.8 1284.2 123.2C1284.6 125.2 1283.8 127.00000000000001 1282.8 128.2C1282.3999999999999 125.60000000000001 1279.8 123.4 1276.8 123.2Z" fill="#fff" /><rect x="1326.5" y="90.5" width="22.6" height="8.1" fill="#fff" stroke="#7a7a7a" stroke-width="1" /><path d="M1337.8 90.5V98.6" fill="none" stroke="#7a7a7a" stroke-width="1" /><rect x="1343.3" y="103.5" width="22.4" height="8" fill="#c0d4ea" stroke="#7a7a7a" stroke-width="1" /><path d="M1354.5 103.5V111.5" fill="none" stroke="#7a7a7a" stroke-width="1" /><rect x="1326.5" y="116.5" width="22.6" height="16.3" fill="#fff" stroke="#7a7a7a" stroke-width="1" /><path d="M1337.8 116.5V132.8M1326.5 124.65H1349.1" fill="none" stroke="#7a7a7a" stroke-width="1" /><path d="M1339 107.6H1325M1331.4 102L1324.4 107.6L1331.4 113.2" fill="none" stroke="#4a80bd" stroke-width="2.6" /><rect x="1384.5" y="90.5" width="22.6" height="8.1" fill="#fff" stroke="#7a7a7a" stroke-width="1" /><path d="M1395.8 90.5V98.6" fill="none" stroke="#7a7a7a" stroke-width="1" /><rect x="1384.5" y="116.5" width="22.6" height="16.3" fill="#fff" stroke="#7a7a7a" stroke-width="1" /><path d="M1395.8 116.5V132.8M1384.5 124.65H1407.1" fill="none" stroke="#7a7a7a" stroke-width="1" /><path d="M1392.5 103.5H1405.5L1410 107.5L1405.5 111.5H1392.5Z" fill="#c0d4ea" stroke="#7a7a7a" stroke-width="1" /><path d="M1401 103.5V111.5" fill="none" stroke="#7a7a7a" stroke-width="1" /><path d="M1405.4 99.6C1412 104 1420 112.4 1426.2 118.4" fill="none" stroke="#d9603b" stroke-width="3.3" stroke-linecap="round"/><path d="M1426.2 100.2C1417 104.6 1409 111.6 1404.8 117.8" fill="none" stroke="#d9603b" stroke-width="3.3" stroke-linecap="round"/><rect x="1442.5" y="99.5" width="40.2" height="29" fill="#fff" stroke="#7a7a7a" stroke-width="1" /><path d="M1452.6 99.5V128.5M1464.6 99.5V128.5M1475.5 99.5V128.5M1442.5 106.5H1482.7M1442.5 121.2H1482.7" fill="none" stroke="#bdbdbd" stroke-width="1" /><rect x="1453.2" y="107.1" width="10.8" height="13.7" fill="#4a80bd" /><path d="M1442.5 128.5V133.5H1453L1456 129.5M1456 130.5V133.5H1466L1470 128.8" fill="none" stroke="#7a7a7a" stroke-width="1" /><path d="M1442.5 89.2V97M1475.5 89.2V97" fill="none" stroke="#4a80bd" stroke-width="1" /><path d="M1447 93.1H1471M1450.4 89.8L1446.4 93.1L1450.4 96.4M1467.6 89.8L1471.6 93.1L1467.6 96.4" fill="none" stroke="#4a80bd" stroke-width="1.5" /><path d="M1525.2 94.4V89.8H1509.6L1518.6 98.4L1509.6 106.8H1525.6V102.4" fill="none" stroke="#444" stroke-width="2.3" stroke-linejoin="miter"/><rect x="1507.6" y="118.6" width="20" height="22" fill="#fff" stroke="#7a7a7a" stroke-width="1" /><rect x="1507.1" y="118.1" width="21" height="3.7" fill="#7a7a7a" /><path d="M1517.7 124.8V137M1512.8 132.4L1517.7 137.6L1522.6 132.4" fill="none" stroke="#3a78c2" stroke-width="2.2" /><path d="M1519.6 150.6L1526 157L1514.4 168.6L1508 162.2Z" fill="#e8798f" /><path d="M1510.6 159.6L1517 166" fill="none" stroke="#f1f1f1" stroke-width="1.2" /><path d="M1514.4 169.6H1529" fill="none" stroke="#7a7a7a" stroke-width="1" /><text x="1638" y="106.8" font-size="22.6" fill="#3a75c4" font-weight="400" font-family="'Liberation Sans',sans-serif" textLength="16" lengthAdjust="spacingAndGlyphs" stroke="#3a75c4" stroke-width="0.7">A</text><text x="1638.6" y="127.6" font-size="22.4" fill="#9a5fc0" font-weight="400" font-family="'Liberation Sans',sans-serif" textLength="13.8" lengthAdjust="spacingAndGlyphs" stroke="#9a5fc0" stroke-width="0.6">Z</text><path d="M1657 100H1680L1670.6 110.6V121.8H1666.4V110.6Z" fill="#808080" /><path d="M1661 101.6H1664.6L1668.6 107V120.4H1667.6V108.6Z" fill="#f1f1f1" /><circle cx="1724.1" cy="105.7" r="13" fill="#fff" stroke="#4a80bd" stroke-width="3.2"/><path d="M1715.6 116.2L1701.6 127.6" fill="none" stroke="#4a80bd" stroke-width="4.6" stroke-linecap="round"/><path d="M1811 127.3H1800.2Q1797.3 127.3 1797.3 124.4V96.6Q1797.3 93.7 1800.2 93.7H1815.4Q1816.6 93.7 1817.4 94.5L1823.2 99.7Q1824 100.5 1824 101.7V112.6" fill="none" stroke="#2d6edb" stroke-width="1.8" stroke-linecap="round"/><path d="M1810.2 100.6C1808.6 100.2 1808 102.2 1808.6 104.4C1809.6 108 1812 110.6 1814.2 111.4C1816.6 112.2 1819.6 112.6 1819.4 111.4C1819.2 110.4 1815.6 110.4 1811.8 111C1807 111.8 1803.6 113.6 1802.6 115.4C1802 116.6 1803.4 116.8 1804.6 115.8C1807.6 113.2 1810.4 106.6 1810.8 103.4C1811 101.8 1810.8 100.8 1810.2 100.6Z" fill="none" stroke="#2d6edb" stroke-width="0.9" /><g transform="translate(1827.2,119.1) rotate(-45)" fill="none" stroke="#2d6edb" stroke-width="1.9" stroke-linecap="round"><path d="M-2.5 -3.5H3.5A3.5 3.5 0 0 1 3.5 3.5H2M-2.5 3.5H-3.5A3.5 3.5 0 0 1 -3.5 -3.5"/></g><g transform="translate(1820.2,126.9) rotate(-45)" fill="none" stroke="#2d6edb" stroke-width="1.9" stroke-linecap="round"><path d="M2.5 3.5H-3.5A3.5 3.5 0 0 1 -3.5 -3.5H-2M2.5 -3.5H3.5A3.5 3.5 0 0 1 3.5 3.5"/></g><path d="M1887 203.4L1892.7 197.2L1898.4 203.4" fill="none" stroke="#666" stroke-width="2" /><path d="M214.6 252.2C219 246 224 241.6 231 238" fill="none" stroke="#c2c2c2" stroke-width="2.6" stroke-linecap="round"/><path d="M215.4 238.2C220 241.6 226 247 230.6 252.6" fill="none" stroke="#c2c2c2" stroke-width="1.6" stroke-linecap="round"/><path d="M268.8 245.4L274.6 251.6C278 245.6 282 241.4 286.6 237.8" fill="none" stroke="#c6c6c6" stroke-width="3" stroke-linejoin="miter"/><text x="322.4" y="251.2" font-size="22.5" fill="#6a6a6a" font-weight="700" font-family="'Liberation Serif',serif" font-style="italic">fx</text><rect x="2.4" y="38.4" width="76.3" height="42" fill="none" stroke="#b61a1d" stroke-width="4.8" rx="8.8" style="filter:drop-shadow(0.6px 1px 0.8px rgba(0,0,0,.45))"/><rect x="5.2" y="41.2" width="70.7" height="36.4" fill="none" stroke="#8c8c8c" stroke-width="0.9" rx="6.4" opacity="0.8"/><circle cx="65.4" cy="113" r="24.5" fill="#b71c1c"/><text x="59.2" y="123" font-size="27" fill="#fff" font-weight="400" font-family="'Liberation Serif',serif" stroke="#fff" stroke-width="0.55">1</text></svg>
</body></html>
